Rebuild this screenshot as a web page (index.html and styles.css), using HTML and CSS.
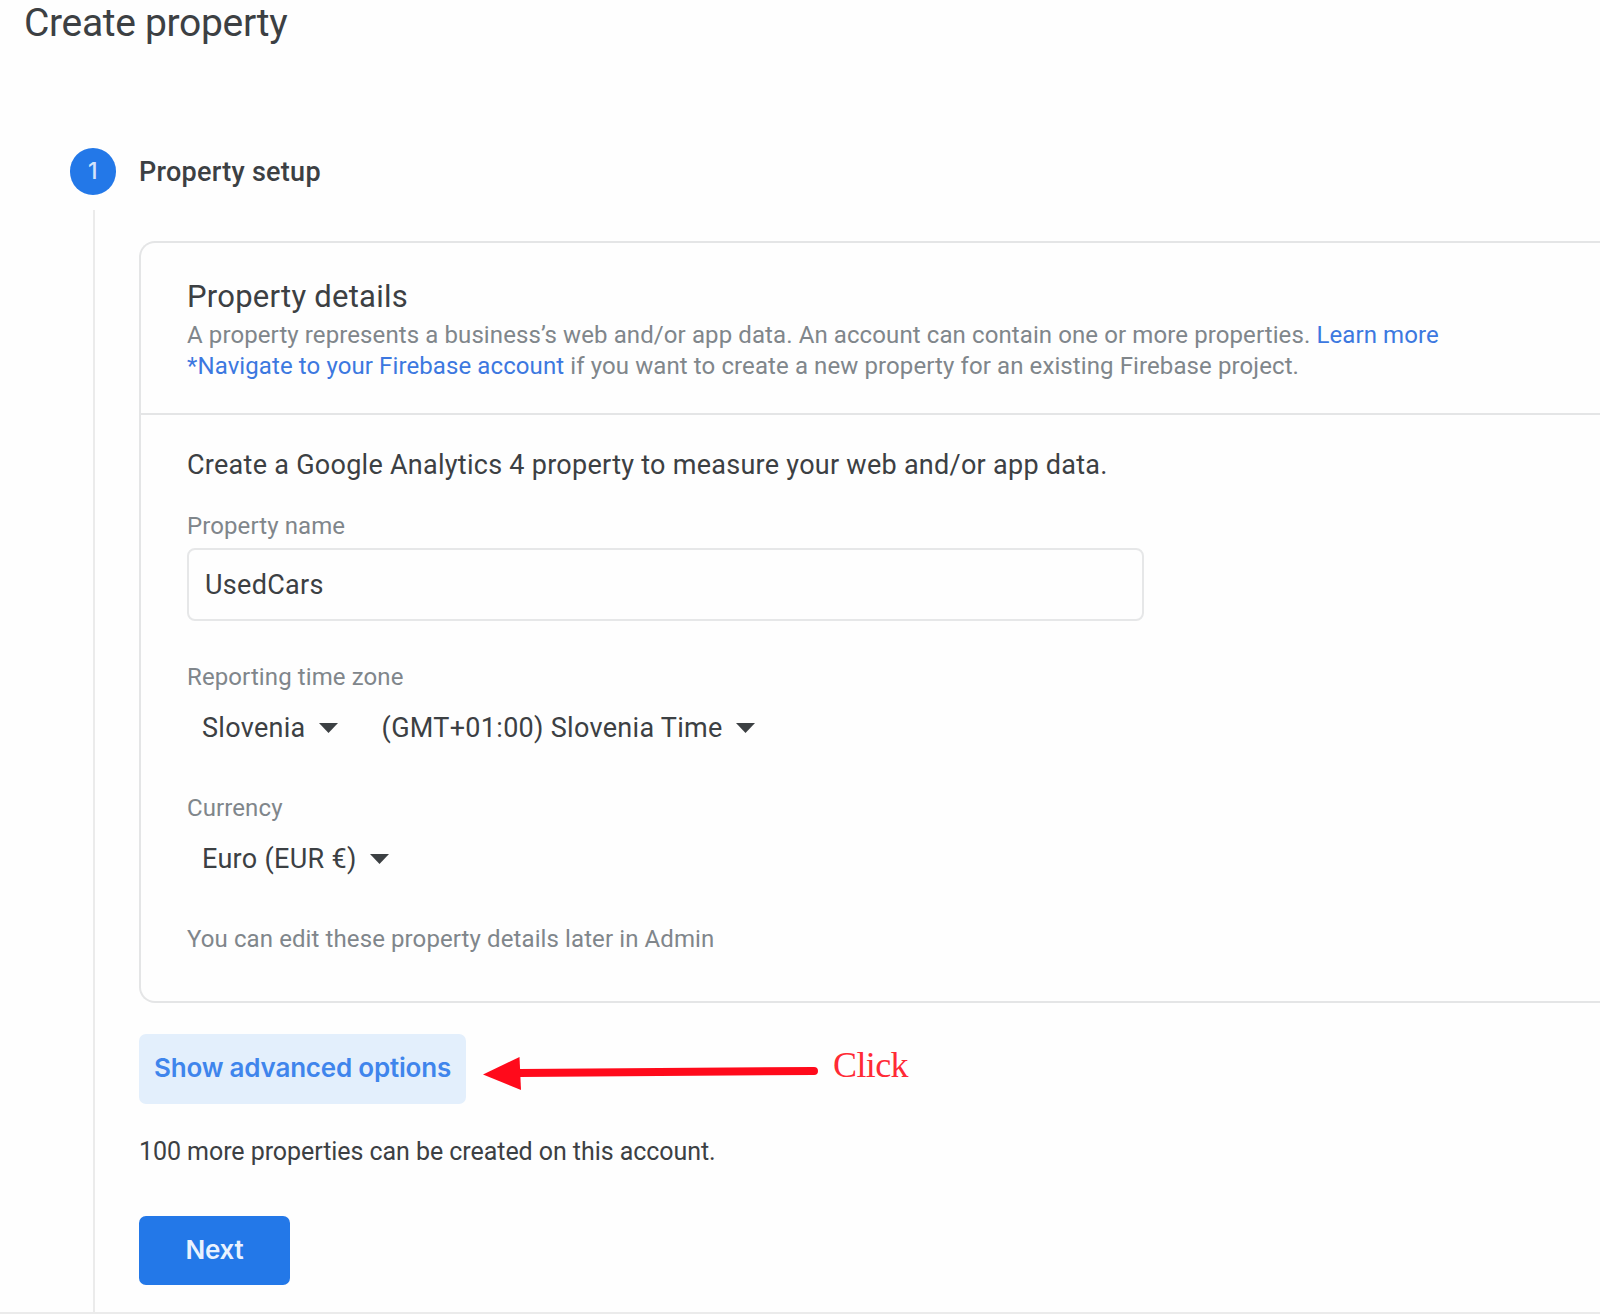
FILE: index.html
```
<!DOCTYPE html>
<html lang="en">

<head>
    <meta charset="utf-8">
    <title>Create property</title>
    <link rel="stylesheet" href="styles.css">
</head>

<body>
    <h1>Create property</h1>

    <div class="step-header">
        <span class="step-number">1</span>
        <h2>Property setup</h2>
    </div>

    <div class="step-content">
        <div class="card">
            <div class="card-head">
                <h3>Property details</h3>
                <p>A property represents a business’s web and/or app data. An account can contain one or more properties. <a>Learn more</a><br>
                <a>*Navigate to your Firebase account</a> if you want to create a new property for an existing Firebase project.</p>
            </div>
            <div class="card-body">
                <p class="intro">Create a Google Analytics 4 property to measure your web and/or app data.</p>

                <label class="label" for="propertyName">Property name</label>
                <input id="propertyName" class="text-input" type="text" value="UsedCars">

                <div class="label">Reporting time zone</div>
                <div class="selects">
                    <span class="select">Slovenia <svg class="caret" viewBox="0 0 19 10"><path d="M0 0h19L9.5 10z"/></svg></span>
                    <span class="select">(GMT+01:00) Slovenia Time <svg class="caret" viewBox="0 0 19 10"><path d="M0 0h19L9.5 10z"/></svg></span>
                </div>

                <div class="label">Currency</div>
                <div class="selects">
                    <span class="select">Euro (EUR €) <svg class="caret" viewBox="0 0 19 10"><path d="M0 0h19L9.5 10z"/></svg></span>
                </div>

                <p class="note">You can edit these property details later in Admin</p>
            </div>
        </div>

        <div class="advanced">
            <button class="btn-light">Show advanced options</button>
            <svg class="arrow" viewBox="0 0 336 36">
                <path d="M36 17L331 15" stroke="#ff0a1b" stroke-width="8" stroke-linecap="round"/>
                <path d="M0 18.500L36.500 1L38 34z" fill="#ff0a1b"/>
            </svg>
            <span class="click">Click</span>
        </div>

        <p class="remaining">100 more properties can be created on this account.</p>
        <button class="btn-next">Next</button>
    </div>
</body>

</html>
```
FILE: styles.css
```
* {
    box-sizing: border-box;
}

body {
    margin: 0;
    font-family: Roboto, sans-serif;
    background-color: #fefefe;
    color: #3c4043;
    overflow: hidden;
}

h1, h2, h3, p {
    margin: 0;
    font-weight: 400;
}

h1 {
    padding-left: 24px;
    font-size: 39px;
    line-height: 47px;
    letter-spacing: -0.32px;
}

.step-header {
    display: flex;
    align-items: center;
    gap: 23px;
    margin-top: 101px;
    padding-left: 69.5px;
}

.step-number {
    width: 46.5px;
    height: 47px;
    border-radius: 50%;
    background-color: #2378e8;
    color: #d3e4fb;
    font: 500 23px/47px Inter, sans-serif;
    text-align: center;
}

h2 {
    font-size: 27px;
    font-weight: 500;
    letter-spacing: 0.27px;
}

.step-content {
    height: 1102px;
    margin: 15px 0 0 93px;
    padding: 31px 0 0 44px;
    border-left: 2px solid #ebebeb;
}

.card {
    border: 2px solid #e4e5e6;
    border-right: none;
    border-radius: 16px 0 0 16px;
}

.card-head {
    padding: 36px 0 31px 46px;
    border-bottom: 2px solid #e4e5e6;
}

h3 {
    font-size: 31px;
    line-height: 36px;
    letter-spacing: 0.25px;
}

.card-head p {
    margin-top: 5px;
    color: #80868b;
    font-size: 24px;
    line-height: 31px;
    letter-spacing: 0.1px;
}

a {
    color: #3c78e0;
}

.card-body {
    padding: 34px 0 48px 46px;
}

.intro {
    margin-bottom: 31px;
    font-size: 27px;
    line-height: 32px;
    letter-spacing: 0.27px;
}

.label, .note {
    display: block;
    color: #80868b;
    font-size: 24px;
    line-height: 28px;
    letter-spacing: 0.1px;
}

.text-input {
    display: block;
    width: 957px;
    height: 73px;
    margin: 8px 0 42px;
    padding: 0 16px;
    border: 2px solid #e6e7e8;
    border-radius: 8px;
    background-color: #fefefe;
    color: #3c4043;
    font: 27px Roboto, sans-serif;
    letter-spacing: 0.3px;
}

.selects {
    display: flex;
    gap: 44px;
    margin: 21px 0 50px;
    padding-left: 15px;
}

.select {
    display: flex;
    align-items: center;
    gap: 13px;
    font-size: 27px;
    line-height: 32px;
    letter-spacing: 0.3px;
}

.caret {
    width: 19px;
    height: 10px;
    fill: #3c4043;
}

.advanced {
    display: flex;
    align-items: center;
    height: 70px;
    margin-top: 31px;
}

button {
    height: 70px;
    padding: 0 0 3px;
    border: none;
    border-radius: 7px;
    font: 600 26px Inter, sans-serif;
    letter-spacing: -0.2px;
}

.btn-light {
    width: 327px;
    background-color: #e3effc;
    color: #3f85ec;
}

.arrow {
    width: 336px;
    height: 36px;
    margin: 10px 0 0 17px;
}

.click {
    margin: 0 0 8px 14px;
    color: #ff2a35;
    font: 36px "Liberation Serif", serif;
    letter-spacing: -0.6px;
}

.remaining {
    margin-top: 33px;
    font-size: 25px;
    line-height: 30px;
    letter-spacing: -0.06px;
}

.btn-next {
    width: 151px;
    height: 69px;
    margin-top: 49px;
    background-color: #2378e8;
    color: #e9f2fe;
}

/* bottom edge of the page */
body::after {
    content: "";
    display: block;
    height: 2px;
    background-color: #ebebeb;
}
```
